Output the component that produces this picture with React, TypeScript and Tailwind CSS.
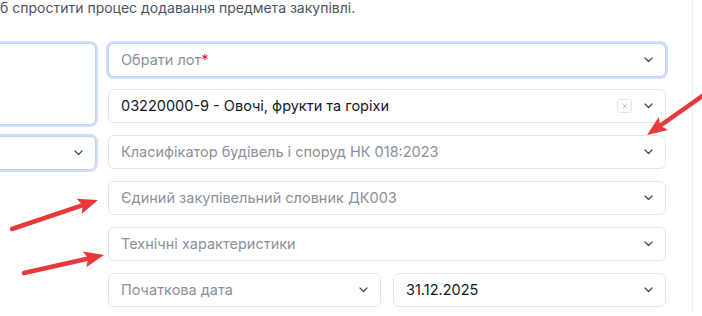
import { X } from "lucide-react";

interface FieldProps {
  text: string;
  placeholder?: boolean;
  required?: boolean;
  focused?: boolean;
  clearable?: boolean;
  className?: string;
}

function Chevron() {
  return (
    <svg width="9" height="6" viewBox="0 0 9 6" fill="none" className="shrink-0">
      <path d="M1 1l3.5 3.5L8 1" stroke="#3f4652" strokeWidth="1.2" strokeLinecap="round" strokeLinejoin="round" />
    </svg>
  );
}

function Field({ text, placeholder, required, focused, clearable, className = "" }: FieldProps) {
  return (
    <div
      className={`h-[34px] flex items-center pl-3 pr-3 rounded-md border bg-white ${
        focused ? "border-[#bcd3f4] ring-2 ring-[#cfe0fa]" : "border-[#e4e6ea]"
      } ${className}`}
    >
      <span
        className={`flex-1 truncate text-[14.5px] ${
          placeholder ? "text-[#8c9199]" : "text-[#111827]"
        }`}
      >
        {text}
        {required && <span className="text-[#e5194a]">*</span>}
      </span>
      {clearable && (
        <span className="w-[15px] h-[14px] mr-3 flex items-center justify-center rounded-[3px] border border-[#e4e6ea]">
          <X size={8} color="#a0a5ad" strokeWidth={2} />
        </span>
      )}
      <Chevron />
    </div>
  );
}

function Arrow({ x1, y1, x2, y2 }: { x1: number; y1: number; x2: number; y2: number }) {
  // arrow head computed from the line direction
  const len = Math.hypot(x2 - x1, y2 - y1);
  const ux = (x2 - x1) / len;
  const uy = (y2 - y1) / len;
  const hl = 20;
  const hw = 8;
  const bx = x2 - ux * hl;
  const by = y2 - uy * hl;
  const pts = `${x2},${y2} ${bx - uy * hw},${by + ux * hw} ${bx + ux * 4},${by + uy * 4} ${bx + uy * hw},${by - ux * hw}`;
  return (
    <g>
      <line x1={x1} y1={y1} x2={bx + ux * 4} y2={by + uy * 4} stroke="#e8383a" strokeWidth="4.5" strokeLinecap="round" />
      <polygon points={pts} fill="#e8383a" />
    </g>
  );
}

export default function App() {
  return (
    <div className="relative w-[702px] h-[316px] overflow-hidden bg-white font-['Inter',sans-serif]">
      <div className="w-[693px] h-full border-r border-[#eceef1]">
        <p className="text-sm leading-5 text-[#4b5563] -mt-0.5 whitespace-nowrap">
          б спростити процес додавання предмета закупівлі.
        </p>

        <div className="flex mt-[25px]">
          {/* Left side */}
          <div className="w-[200px] ml-[-104px] shrink-0 flex flex-col">
            <div className="h-[82px] rounded-md border border-[#bcd3f4] ring-2 ring-[#cfe0fa] bg-white" />
            <div className="h-[34px] mt-[11px] flex items-center justify-end pr-3 rounded-md border border-[#bcd3f4] ring-2 ring-[#cfe0fa]">
              <Chevron />
            </div>
          </div>

          {/* Right side */}
          <div className="w-[558px] ml-3 flex flex-col gap-3">
            <Field text="Обрати лот" placeholder required focused />
            <Field text="03220000-9 - Овочі, фрукти та горіхи" clearable />
            <Field text="Класифікатор будівель і споруд НК 018:2023" placeholder />
            <Field text="Єдиний закупівельний словник ДК003" placeholder />
            <Field text="Технічні характеристики" placeholder />
            <div className="flex gap-3">
              <Field text="Початкова дата" placeholder className="flex-1" />
              <Field text="31.12.2025" className="flex-1" />
            </div>
          </div>
        </div>
      </div>

      <svg className="absolute inset-0 pointer-events-none" width="702" height="316">
        <Arrow x1={708} y1={92} x2={647} y2={135} />
        <Arrow x1={12} y1={229} x2={98} y2={200} />
        <Arrow x1={24} y1={273} x2={104} y2={255} />
      </svg>
    </div>
  );
}
